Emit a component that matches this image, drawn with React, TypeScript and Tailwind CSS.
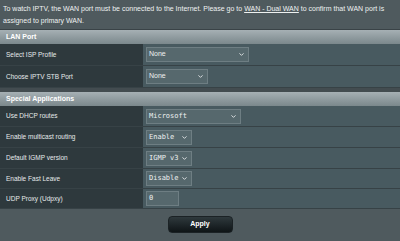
import { ChevronDown } from 'lucide-react';

interface RowProps {
  label: string;
  height: string;
  children: React.ReactNode;
}

function Row({ label, height, children }: RowProps) {
  return (
    <div className={`grid grid-cols-[143px_1fr] border-b border-[#374246] ${height}`}>
      <div className="flex items-center bg-[#2e393d] pl-[6px] text-[6.5px] text-[#e6eaeb]">{label}</div>
      <div className="flex items-center bg-[#485a60] pl-[3px]">{children}</div>
    </div>
  );
}

function Select({ value, width, mono = false }: { value: string; width: string; mono?: boolean }) {
  return (
    <div
      className={`flex h-[15px] items-center justify-between border border-[#6e7e83] bg-[#56686d] pl-[2px] pr-[3px] text-[#eef1f1] ${width} ${
        mono ? 'font-["DejaVu_Sans_Mono",monospace] text-[7px]' : 'text-[7px]'
      }`}
    >
      <span>{value}</span>
      <ChevronDown size={7} strokeWidth={3} className="text-[#e8eced]" />
    </div>
  );
}

function SectionHeader({ title }: { title: string }) {
  return (
    <div className="flex h-[14px] items-center bg-gradient-to-b from-[#a6b0b4] to-[#7b888c] pl-[6px] text-[7px] font-bold text-white">
      {title}
    </div>
  );
}

export default function App() {
  return (
    <div className='h-[241px] w-[400px] overflow-hidden bg-[#4f5a5e] font-["Liberation_Sans",Arial,sans-serif]'>
      {/* Notice */}
      <p className="h-[29px] px-[3px] pt-[3px] text-[7px] leading-[12px] text-[#eef1f1]">
        To watch IPTV, the WAN port must be connected to the Internet. Please go to{' '}
        <span className="underline">WAN - Dual WAN</span> to confirm that WAN port is assigned to primary WAN.
      </p>

      {/* LAN Port */}
      <div className="border-t border-[#3a4347]">
        <SectionHeader title="LAN Port" />
        <Row label="Select ISP Profile" height="h-[22px]">
          <Select value="None" width="w-[103px]" />
        </Row>
        <Row label="Choose IPTV STB Port" height="h-[22px]">
          <Select value="None" width="w-[62px]" />
        </Row>
      </div>

      <div className="h-[4px] bg-[#434c50]" />

      {/* Special Applications */}
      <div>
        <SectionHeader title="Special Applications" />
        <Row label="Use DHCP routes" height="h-[21px]">
          <Select value="Microsoft" width="w-[95px]" mono />
        </Row>
        <Row label="Enable multicast routing" height="h-[21px]">
          <Select value="Enable" width="w-[46px]" mono />
        </Row>
        <Row label="Default IGMP version" height="h-[21px]">
          <Select value="IGMP v3" width="w-[46px]" mono />
        </Row>
        <Row label="Enable Fast Leave" height="h-[20px]">
          <Select value="Disable" width="w-[46px]" mono />
        </Row>
        <Row label="UDP Proxy (Udpxy)" height="h-[20px]">
          <div className='flex h-[15px] w-[33px] items-center border border-[#6e7e83] bg-[#56686d] pl-[2px] font-["DejaVu_Sans_Mono",monospace] text-[7px] text-[#eef1f1]'>
            0
          </div>
        </Row>
      </div>

      {/* Apply */}
      <div className="mt-[7px] flex justify-center">
        <button className="h-[17px] w-[65px] rounded-[4px] border border-[#1b2225] bg-gradient-to-b from-[#2f393d] to-[#0f1517] text-[7px] font-bold text-white">
          Apply
        </button>
      </div>
    </div>
  );
}
